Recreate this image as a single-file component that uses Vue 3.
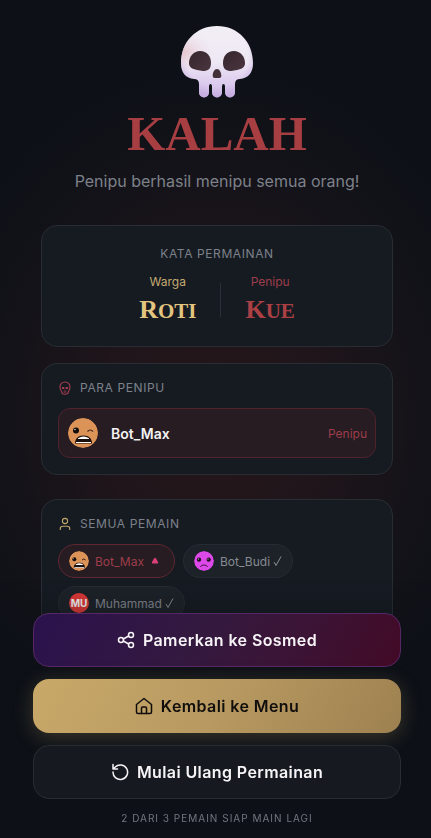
<script setup>
const villains = [{ name: 'Bot_Max', role: 'Penipu' }]
const players = [
  { name: 'Bot_Max', face: 'wink', impostor: true },
  { name: 'Bot_Budi', face: 'sad', impostor: false },
  { name: 'Muhammad', face: 'initials', impostor: false },
]
</script>

<template>
  <div class="page">
    <main class="content">
      <header class="hero">
        <svg class="skull" viewBox="0 0 72 72" aria-hidden="true">
          <defs>
            <linearGradient id="bone" x1="0" y1="0" x2="0" y2="1">
              <stop offset="0" stop-color="#f2eef5" />
              <stop offset=".5" stop-color="#eee8f4" />
              <stop offset=".8" stop-color="#dccbee" />
              <stop offset="1" stop-color="#cfbbe5" />
            </linearGradient>
            <radialGradient id="blush" cx=".04" cy=".5" r=".4">
              <stop offset="0" stop-color="#e6bfc4" stop-opacity=".8" />
              <stop offset="1" stop-color="#eadcea" stop-opacity="0" />
            </radialGradient>
            <radialGradient id="violet" cx=".5" cy=".42" r=".6">
              <stop offset=".72" stop-color="#bda0dc" stop-opacity="0" />
              <stop offset="1" stop-color="#bda0dc" stop-opacity=".6" />
            </radialGradient>
            <linearGradient id="socket" x1="0" y1="0" x2="1" y2="1">
              <stop offset="0" stop-color="#35262d" />
              <stop offset="1" stop-color="#4b353e" />
            </linearGradient>
            <path
              id="bone-path"
              d="M36 0C15 0 0 16 0 37c0 10 5 15 13 16q5 0 5 5v8.500a5 5 0 0 0 10 0V61q0-3 1.500-3t1.500 3v5.500a5 5 0 0 0 10 0V61q0-3 1.500-3t1.500 3v5.500a5 5 0 0 0 10 0V58q0-5 5-5c8-1 13-6 13-16C72 16 57 0 36 0Z"
            />
          </defs>
          <use href="#bone-path" fill="url(#bone)" />
          <use href="#bone-path" fill="url(#violet)" />
          <path d="M36 0C15 0 0 16 0 37c0 10 5 15 13 16h46c8-1 13-6 13-16C72 16 57 0 36 0Z" fill="url(#blush)" />
          <path d="M19 25c7 0 11 5 11 12 0 6-3 8-8 8l-6-1c-5-1-8-3-8-7 0-7 5-12 11-12Z" fill="url(#socket)" />
          <path d="M53 25c-7 0-11 5-11 12 0 6 3 8 8 8l6-1c5-1 8-3 8-7 0-7-5-12-11-12Z" fill="url(#socket)" />
          <path d="M36 43c-2.500 0-4 3-4.300 6-.2 2 .6 3 2 3h4.600c1.500 0 2.200-1 2-3-.4-3-1.800-6-4.300-6Z" fill="#432f38" />
        </svg>
        <h1>KALAH</h1>
        <p>Penipu berhasil menipu semua orang!</p>
      </header>

      <section class="card words">
        <h2>KATA PERMAINAN</h2>
        <div class="pair">
          <div class="word citizen"><span>Warga</span><strong>Roti</strong></div>
          <div class="rule"></div>
          <div class="word impostor"><span>Penipu</span><strong>Kue</strong></div>
        </div>
      </section>

      <section class="card">
        <h2 class="with-icon">
          <svg class="mini red" viewBox="0 0 14 14" aria-hidden="true">
            <path d="M7 1C4 1 2 3 2 6c0 1.500.3 2.500 1 3.500.6.800.6 1.200.8 2C4 12.800 5 13.300 7 13.300s3-.5 3.200-1.800c.2-.8.2-1.200.8-2 .7-1 1-2 1-3.500 0-3-2-5-5-5Z" />
            <path d="M4.500 6.500h1.300v1H4.500zM8.200 6.500h1.300v1H8.200zM6.500 9.200h1M5.500 11h3" />
          </svg>
          PARA PENIPU
        </h2>
        <div v-for="v in villains" :key="v.name" class="villain">
          <svg class="avatar large" viewBox="0 0 30 30" aria-hidden="true">
            <circle cx="15" cy="15" r="15" fill="#dc9358" />
            <circle cx="8" cy="12.500" r="3" fill="#120d0b" /><circle cx="7" cy="11.500" r=".7" fill="#fff" />
            <path d="M19.500 13.500q2.800-3 5.500 0" fill="none" stroke="#3a2315" stroke-width="1.200" />
            <path d="M7 25.500c0-5 3-8 8.500-8s8.500 3 8.500 8Z" fill="#1c100d" />
            <path d="M10 20.200q5.500-3.600 11 0v.8H10ZM8 24h15v1H8Z" fill="#fff" />
          </svg>
          <strong>{{ v.name }}</strong>
          <span>{{ v.role }}</span>
        </div>
      </section>

      <section class="card roster">
        <h2 class="with-icon">
          <svg class="mini gold" viewBox="0 0 14 14" aria-hidden="true">
            <circle cx="7" cy="4" r="2.600" />
            <path d="M2.300 13v-1.500q0-2.300 2.300-2.300h4.800q2.300 0 2.300 2.300V13" />
          </svg>
          SEMUA PEMAIN
        </h2>
        <ul>
          <li v-for="p in players" :key="p.name" :class="{ marked: p.impostor }">
            <svg v-if="p.face === 'wink'" class="avatar" viewBox="0 0 30 30" aria-hidden="true">
              <circle cx="15" cy="15" r="15" fill="#dc9358" />
              <circle cx="8" cy="12.500" r="3" fill="#120d0b" /><circle cx="7" cy="11.500" r=".7" fill="#fff" />
              <path d="M19.500 13.500q2.800-3 5.500 0" fill="none" stroke="#3a2315" stroke-width="1.500" />
              <path d="M7 25.500c0-5 3-8 8.500-8s8.500 3 8.500 8Z" fill="#1c100d" />
              <path d="M10 20.200q5.500-3.600 11 0v.8H10ZM8 24h15v1H8Z" fill="#fff" />
            </svg>
            <svg v-else-if="p.face === 'sad'" class="avatar" viewBox="0 0 30 30" aria-hidden="true">
              <circle cx="15" cy="15" r="15" fill="#dc49e8" />
              <circle cx="7.500" cy="13" r="3.200" fill="#210b24" /><circle cx="22" cy="13" r="3.200" fill="#210b24" />
              <circle cx="6.500" cy="12" r=".8" fill="#fff" /><circle cx="21" cy="12" r=".8" fill="#fff" />
              <path d="M9.500 24q1-3 5.500-3t5.500 3" fill="none" stroke="#48144d" stroke-width="1.500" />
            </svg>
            <span v-else class="initials">MU</span>
            <span>{{ p.name }}</span>
            <svg v-if="p.impostor" class="mark" viewBox="0 0 14 14" aria-hidden="true">
              <path d="M4 4.500Q5 3 6 4.500l2 3.500Q8.500 9.500 7.500 9.500h-5Q1.500 9.500 2 8Z" fill="#db3f78" />
            </svg>
            <svg v-else class="check" viewBox="0 0 9 12" aria-hidden="true">
              <path d="M1 7l2 3.500L8 1.500" fill="none" stroke="#8b9098" />
            </svg>
          </li>
        </ul>
      </section>
    </main>

    <footer class="actions">
      <button type="button" class="share">
        <svg viewBox="0 0 18 18" aria-hidden="true">
          <circle cx="14" cy="4" r="2.500" /><circle cx="4" cy="9" r="2.500" /><circle cx="14" cy="14" r="2.500" />
          <path d="M6.300 8l5.400-3M6.300 10l5.400 3" />
        </svg>
        Pamerkan ke Sosmed
      </button>
      <button type="button" class="menu">
        <svg viewBox="0 0 18 18" aria-hidden="true">
          <path d="M1.500 7.500 9 1.500l7.500 6V15q0 1.500-1.500 1.500H3Q1.500 16.500 1.500 15Z" />
          <path d="M6.500 16.500V11q0-1 1-1h3q1 0 1 1v5.500" />
        </svg>
        Kembali ke Menu
      </button>
      <button type="button" class="restart">
        <svg viewBox="0 0 18 18" aria-hidden="true">
          <path d="M2 9a7.300 7.300 0 1 0 2.200-5L2 6M2 1.500V6h4.500" />
        </svg>
        Mulai Ulang Permainan
      </button>
      <p>2 DARI 3 PEMAIN SIAP MAIN LAGI</p>
    </footer>
  </div>
</template>

<style>
body {
  background: #0d1117;
}
</style>

<style scoped>
* {
  box-sizing: border-box;
}
.page {
  height: 100vh;
  overflow: hidden;
  background: radial-gradient(ellipse 68% 42% at 50% 50%, #26171b 0%, #1f151a 38%, #141319 70%, #0d1117 100%);
  color: #f3f1f2;
  font-family: Inter, sans-serif;
}
.content {
  display: flex;
  flex-direction: column;
  padding: 26px 38px 0 41px;
}
.hero {
  display: flex;
  flex-direction: column;
  align-items: center;
  margin-bottom: 32px;
}
.skull {
  width: 72px;
  height: 72px;
}
h1,
h2,
p,
ul {
  margin: 0;
}
h1 {
  margin-top: 12px;
  color: #a63e42;
  font: 700 49px/48px "Liberation Serif", serif;
}
.hero p {
  margin-top: 11px;
  color: #7d818a;
  font-size: 16px;
  line-height: 24px;
  white-space: nowrap;
}
.card {
  padding: 16px;
  border: 1px solid #282d34;
  border-radius: 16px;
  background: #161b22;
  margin-bottom: 16px;
}
.card.words {
  padding: 20px 16px;
  text-align: center;
}
.card.roster {
  margin-top: 8px;
}
h2 {
  margin-bottom: 12px;
  color: #7d818a;
  font-size: 12px;
  font-weight: 400;
  line-height: 16px;
  letter-spacing: .05em;
}
.with-icon {
  display: flex;
  align-items: center;
  gap: 8px;
}
.mini {
  width: 14px;
  height: 14px;
  fill: none;
  stroke-width: 1.100;
}
.red {
  stroke: #a63e50;
}
.gold {
  stroke: #bfa46c;
}
.pair {
  display: flex;
  justify-content: center;
  align-items: center;
  gap: 24px;
}
.word {
  display: flex;
  flex-direction: column;
  align-items: center;
  gap: 4px;
}
.word span {
  font-size: 12px;
  line-height: 16px;
}
.word strong {
  font: 700 21px/32px "Liberation Serif", serif;
  height: 32px;
  text-transform: uppercase;
}
.word strong::first-letter {
  font-size: 26px;
}
.citizen {
  color: #c4aa70;
}
.citizen strong {
  color: #e3c57f;
}
.impostor {
  color: #9d3d4a;
}
.impostor strong {
  color: #ab4044;
}
.rule {
  width: 1px;
  height: 34px;
  background: #2a3037;
}
.villain {
  display: flex;
  align-items: center;
  gap: 13px;
  height: 50px;
  padding: 0 8px 0 9px;
  border: 1px solid #4f222c;
  border-radius: 12px;
  background: #261c22;
}
.villain strong {
  flex: 1;
  font-size: 14px;
  font-weight: 600;
}
.villain span {
  color: #9d3d4a;
  font-size: 12px;
}
.avatar,
.initials {
  flex: none;
  width: 20px;
  height: 20px;
  border-radius: 50%;
}
.avatar.large {
  width: 30px;
  height: 30px;
}
.initials {
  background: #e53a38;
  color: #fff;
  font-size: 10px;
  font-weight: 700;
  line-height: 20px;
  text-align: center;
}
ul {
  display: flex;
  flex-wrap: wrap;
  gap: 8px;
  padding: 0;
  list-style: none;
}
li {
  display: flex;
  align-items: center;
  gap: 6px;
  height: 34px;
  padding: 0 10px;
  border: 1px solid #252b32;
  border-radius: 17px;
  background: #1d2228;
  color: #868a92;
  font-size: 12px;
}
li.marked {
  border-color: #5f2731;
  background: #261c22;
  color: #9d3d4a;
}
.mark {
  width: 14px;
  height: 14px;
}
.check {
  width: 9px;
  height: 12px;
  margin-left: -3px;
}
.actions {
  position: fixed;
  right: 0;
  bottom: 0;
  left: 0;
  display: flex;
  flex-direction: column;
  gap: 12px;
  padding: 32px 30px 13px 33px;
  background: linear-gradient(to top, #0d1117 0%, #0d1117 50%, #0d111700 100%);
}
button {
  display: flex;
  align-items: center;
  justify-content: center;
  gap: 8px;
  height: 54px;
  border: 1px solid transparent;
  border-radius: 16px;
  color: #f7f4f7;
  font: 600 16px/24px Inter, sans-serif;
  letter-spacing: .025em;
}
button svg {
  width: 18px;
  height: 18px;
  fill: none;
  stroke: currentColor;
  stroke-width: 1.500;
  stroke-linecap: round;
  stroke-linejoin: round;
}
.share {
  border-color: #552766;
  background: linear-gradient(120deg, #2b124d 0%, #34193f 45%, #3b1436 70%, #420a26 100%);
}
.menu {
  border: 0;
  background: linear-gradient(120deg, #c9a969 0%, #b89961 50%, #9d8150 100%);
  box-shadow: 0 4px 20px #c9a96940;
  color: #100e0d;
}
.restart {
  border-color: #282d34;
  background: #161920;
}
.actions p {
  color: #707580;
  font-size: 10px;
  line-height: 14px;
  letter-spacing: 1px;
  text-align: center;
}
</style>
